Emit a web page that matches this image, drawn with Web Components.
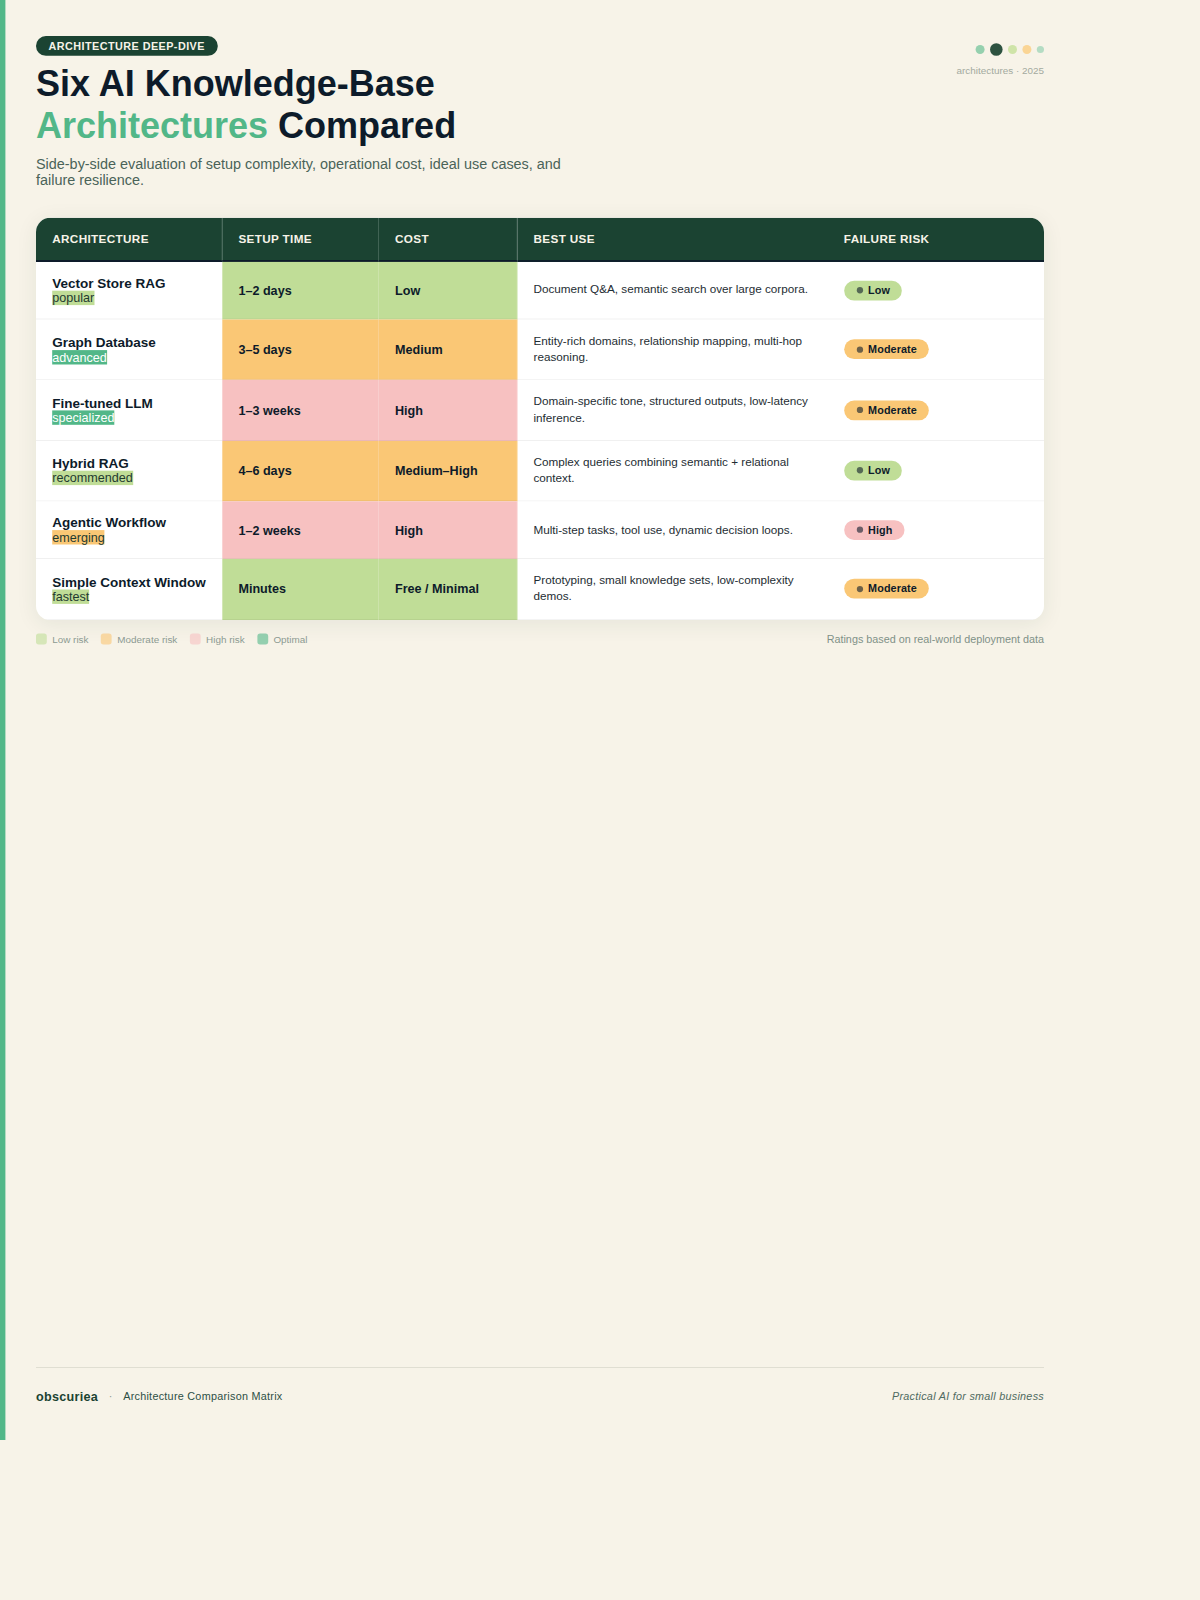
<!DOCTYPE html>
<html lang="en">
<head>
<meta charset="utf-8">
<title>Six AI Knowledge-Base Architectures Compared</title>
<style>
    html, body {
        margin: 0;
        background: #F7F3E8;
    }
</style>
</head>
<body>
<kb-slide>
    <kb-header slot="header"></kb-header>
    <kb-matrix slot="main"></kb-matrix>
    <kb-legend slot="main"></kb-legend>
    <kb-footer slot="footer"></kb-footer>
</kb-slide>

<script>
const ROWS = [
    { name: 'Vector Store RAG', tag: 'popular', tagKind: 'low', setup: '1–2 days', cost: 'Low', level: 'low', use: 'Document Q&A, semantic search over large corpora.', risk: 'Low', riskKind: 'low' },
    { name: 'Graph Database', tag: 'advanced', tagKind: 'opt', setup: '3–5 days', cost: 'Medium', level: 'mod', use: 'Entity-rich domains, relationship mapping, multi-hop reasoning.', risk: 'Moderate', riskKind: 'mod' },
    { name: 'Fine-tuned LLM', tag: 'specialized', tagKind: 'opt', setup: '1–3 weeks', cost: 'High', level: 'high', use: 'Domain-specific tone, structured outputs, low-latency inference.', risk: 'Moderate', riskKind: 'mod' },
    { name: 'Hybrid RAG', tag: 'recommended', tagKind: 'low', setup: '4–6 days', cost: 'Medium–High', level: 'mod', use: 'Complex queries combining semantic + relational context.', risk: 'Low', riskKind: 'low' },
    { name: 'Agentic Workflow', tag: 'emerging', tagKind: 'mod', setup: '1–2 weeks', cost: 'High', level: 'high', use: 'Multi-step tasks, tool use, dynamic decision loops.', risk: 'High', riskKind: 'high' },
    { name: 'Simple Context Window', tag: 'fastest', tagKind: 'low', setup: 'Minutes', cost: 'Free / Minimal', level: 'low', use: 'Prototyping, small knowledge sets, low-complexity demos.', risk: 'Moderate', riskKind: 'mod' }
];

// the slide is drawn at 1200x1600 and shrunk to 90%
class KbSlide extends HTMLElement {
    constructor() {
        super();
        this.attachShadow({ mode: 'open' });
        this.shadowRoot.innerHTML = `
            <style>
                :host {
                    display: flex;
                    flex-direction: column;
                    width: 1200px;
                    height: 1600px;
                    box-sizing: border-box;
                    padding: 40px;
                    position: relative;
                    transform: scale(0.9);
                    transform-origin: 0 0;
                    font-family: "Liberation Sans", Arial, sans-serif;
                    color: #0D1B2A;
                }
                .bar {
                    position: absolute;
                    left: 0;
                    top: 0;
                    bottom: 0;
                    width: 6px;
                    background: #52B788;
                }
                .main {
                    flex: 1;
                }
            </style>
            <div class="bar"></div>
            <slot name="header"></slot>
            <div class="main"><slot name="main"></slot></div>
            <slot name="footer"></slot>
        `;
    }
}

class KbHeader extends HTMLElement {
    constructor() {
        super();
        this.attachShadow({ mode: 'open' });
        this.shadowRoot.innerHTML = `
            <style>
                :host {
                    display: flex;
                    justify-content: space-between;
                    align-items: flex-start;
                    margin-bottom: 32px;
                }
                .badge {
                    display: block;
                    width: fit-content;
                    background: #1B4332;
                    color: #F7F3E8;
                    font-size: 12px;
                    font-weight: 700;
                    letter-spacing: 0.5px;
                    padding: 4px 14px;
                    border-radius: 20px;
                }
                h1 {
                    margin: 8px 0 12px;
                    font-size: 40px;
                    line-height: 46px;
                    font-weight: 700;
                    color: #0D1B2A;
                }
                h1 span {
                    color: #52B788;
                }
                p {
                    margin: 0;
                    max-width: 600px;
                    font-size: 16px;
                    color: #4A6358;
                }
                .mark {
                    display: flex;
                    flex-direction: column;
                    align-items: flex-end;
                    gap: 10px;
                    padding-top: 8px;
                }
                .dots {
                    display: flex;
                    align-items: center;
                    gap: 6px;
                }
                .dots i {
                    display: block;
                    border-radius: 50%;
                }
                small {
                    font-size: 11px;
                    color: #A3AA9F;
                }
            </style>
            <div>
                <span class="badge">ARCHITECTURE DEEP-DIVE</span>
                <h1>Six AI Knowledge-Base<br><span>Architectures</span> Compared</h1>
                <p>Side-by-side evaluation of setup complexity, operational cost, ideal use cases, and failure resilience.</p>
            </div>
            <div class="mark">
                <div class="dots">
                    <i style="width:10px;height:10px;background:#95D0AE"></i>
                    <i style="width:14px;height:14px;background:#2D5240"></i>
                    <i style="width:10px;height:10px;background:#CFE4A8"></i>
                    <i style="width:10px;height:10px;background:#FAD595"></i>
                    <i style="width:8px;height:8px;background:#B4DCC3"></i>
                </div>
                <small>architectures · 2025</small>
            </div>
        `;
    }
}

class KbMatrix extends HTMLElement {
    constructor() {
        super();
        this.attachShadow({ mode: 'open' });
        const body = ROWS.map(r => `
            <tr>
                <td class="arch">
                    <b>${r.name}</b>
                    <span class="tag ${r.tagKind}">${r.tag}</span>
                </td>
                <td class="cell ${r.level}">${r.setup}</td>
                <td class="cell ${r.level}">${r.cost}</td>
                <td class="use">${r.use.replace('&', '&amp;')}</td>
                <td class="risk"><kb-pill kind="${r.riskKind}">${r.risk}</kb-pill></td>
            </tr>`).join('');
        this.shadowRoot.innerHTML = `
            <style>
                :host {
                    display: block;
                    border-radius: 16px;
                    overflow: hidden;
                    background: #fff;
                    box-shadow: 0 4px 24px rgba(27, 67, 50, 0.08);
                }
                table {
                    width: 100%;
                    border-collapse: separate;
                    border-spacing: 0;
                    table-layout: fixed;
                }
                th {
                    background: #1B4332;
                    color: #F7F3E8;
                    font-size: 13px;
                    font-weight: 700;
                    letter-spacing: 0.4px;
                    text-align: left;
                    padding: 16px 18px;
                    border-bottom: 2px solid #0D1B2A;
                    border-right: 1px solid rgba(255, 255, 255, 0.12);
                }
                th:nth-child(n+4) {
                    border-right: 0;
                }
                th:nth-child(3) {
                    border-right-color: rgba(255, 255, 255, 0.15);
                }
                td {
                    padding: 15px 18px;
                    border-bottom: 1px solid rgba(0, 0, 0, 0.06);
                    vertical-align: middle;
                }
                .arch {
                    font-size: 14px;
                }
                .arch b {
                    display: block;
                    font-size: 15px;
                    white-space: nowrap;
                }
                .tag.low { background: #C0DD97; color: #1F3A30; }
                .tag.mod { background: #FAC775; color: #1F3A30; }
                .tag.opt { background: #52B788; color: #fff; }
                .cell {
                    font-size: 14px;
                    font-weight: 700;
                    border-right: 1px solid rgba(255, 255, 255, 0.15);
                }
                .cell.low { background: #C0DD97; }
                .cell.mod { background: #FAC775; }
                .cell.high { background: #F7C1C1; }
                .use {
                    font-size: 13px;
                    line-height: 1.4;
                    color: #1E2D33;
                }
            </style>
            <table>
                <colgroup>
                    <col style="width:206.9px">
                    <col style="width:174px">
                    <col style="width:153.9px">
                    <col style="width:344.8px">
                    <col>
                </colgroup>
                <thead>
                    <tr>
                        <th>ARCHITECTURE</th>
                        <th>SETUP TIME</th>
                        <th>COST</th>
                        <th>BEST USE</th>
                        <th>FAILURE RISK</th>
                    </tr>
                </thead>
                <tbody>${body}</tbody>
            </table>
        `;
    }
}

class KbPill extends HTMLElement {
    constructor() {
        super();
        this.attachShadow({ mode: 'open' });
        this.shadowRoot.innerHTML = `
            <style>
                :host {
                    display: inline-flex;
                    align-items: center;
                    gap: 6px;
                    padding: 4px 13.5px 4px 14px;
                    border-radius: 20px;
                    font-size: 12px;
                    font-weight: 700;
                    letter-spacing: 0.1px;
                    vertical-align: middle;
                }
                :host([kind="low"]) { background: #C0DD97; }
                :host([kind="mod"]) { background: #FAC775; }
                :host([kind="high"]) { background: #F7C1C1; }
                i {
                    width: 7px;
                    height: 7px;
                    border-radius: 50%;
                    background: currentColor;
                    opacity: 0.6;
                }
            </style>
            <i></i><slot></slot>
        `;
    }
}

class KbLegend extends HTMLElement {
    constructor() {
        super();
        this.attachShadow({ mode: 'open' });
        const items = [['Low risk', '#C0DD97'], ['Moderate risk', '#FAC775'], ['High risk', '#F7C1C1'], ['Optimal', '#52B788']];
        this.shadowRoot.innerHTML = `
            <style>
                :host {
                    display: flex;
                    justify-content: space-between;
                    align-items: center;
                    margin-top: 14px;
                }
                .items {
                    display: flex;
                    gap: 14px;
                }
                .item {
                    display: flex;
                    align-items: center;
                    gap: 6px;
                    font-size: 11px;
                    color: #8C9A92;
                }
                .item i {
                    width: 12px;
                    height: 12px;
                    border-radius: 3px;
                    opacity: 0.6;
                }
                .note {
                    font-size: 12px;
                    color: #7F9187;
                }
            </style>
            <div class="items">
                ${items.map(([t, c]) => `<div class="item"><i style="background:${c}"></i>${t}</div>`).join('')}
            </div>
            <div class="note">Ratings based on real-world deployment data</div>
        `;
    }
}

class KbFooter extends HTMLElement {
    constructor() {
        super();
        this.attachShadow({ mode: 'open' });
        this.shadowRoot.innerHTML = `
            <style>
                :host {
                    display: flex;
                    justify-content: space-between;
                    align-items: center;
                    border-top: 1px solid #DDDCD0;
                    padding-top: 24px;
                }
                .left {
                    display: flex;
                    align-items: center;
                    gap: 12px;
                }
                .brand {
                    font-size: 14px;
                    font-weight: 700;
                    letter-spacing: 0.3px;
                    color: #1B4332;
                }
                .sep {
                    font-size: 12px;
                    color: #8C9A92;
                }
                .title {
                    font-size: 12px;
                    letter-spacing: 0.3px;
                    color: #2D4F45;
                }
                .motto {
                    font-size: 12px;
                    font-style: italic;
                    letter-spacing: 0.3px;
                    color: #4F6A60;
                }
            </style>
            <div class="left">
                <span class="brand">obscuriea</span>
                <span class="sep">·</span>
                <span class="title">Architecture Comparison Matrix</span>
            </div>
            <div class="motto">Practical AI for small business</div>
        `;
    }
}

customElements.define('kb-slide', KbSlide);
customElements.define('kb-header', KbHeader);
customElements.define('kb-matrix', KbMatrix);
customElements.define('kb-pill', KbPill);
customElements.define('kb-legend', KbLegend);
customElements.define('kb-footer', KbFooter);
</script>
</body>
</html>
